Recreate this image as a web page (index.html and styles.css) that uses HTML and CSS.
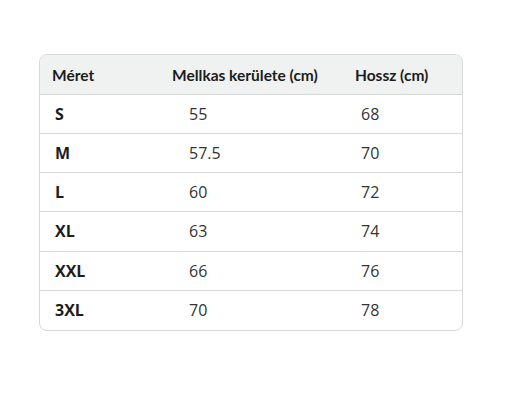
FILE: index.html
```html
<!DOCTYPE html>
<html lang="hu">
<head>
<meta charset="utf-8">
<link rel="stylesheet" href="styles.css">
</head>
<body>
<div class="wrap">
  <table class="size-table">
    <colgroup>
      <col class="c1"><col class="c2"><col class="c3">
    </colgroup>
    <thead>
      <tr><th>Méret</th><th class="h2">Mellkas kerülete (cm)</th><th class="h3">Hossz (cm)</th></tr>
    </thead>
    <tbody>
      <tr><td class="size">S</td><td class="v2">55</td><td class="v3">68</td></tr>
      <tr><td class="size">M</td><td class="v2">57.5</td><td class="v3">70</td></tr>
      <tr><td class="size">L</td><td class="v2">60</td><td class="v3">72</td></tr>
      <tr><td class="size">XL</td><td class="v2">63</td><td class="v3">74</td></tr>
      <tr><td class="size">XXL</td><td class="v2">66</td><td class="v3">76</td></tr>
      <tr><td class="size">3XL</td><td class="v2">70</td><td class="v3">78</td></tr>
    </tbody>
  </table>
</div>
</body>
</html>
```

FILE: styles.css
```css
html, body {
  margin: 0;
  padding: 0;
  background: #ffffff;
}
.wrap {
  padding: 54px 0 0 39px;
}
.size-table {
  width: 424px;
  border-collapse: separate;
  border-spacing: 0;
  border: 1px solid #d6d9d8;
  border-radius: 8px;
  overflow: hidden;
  font-family: "Open Sans", sans-serif;
  table-layout: fixed;
}
.c1 { width: 117px; }
.c2 { width: 189px; }
.c3 { width: 116px; }
th {
  background: #f0f2f1;
  height: 39px;
  padding: 0 0 0 12px;
  text-align: left;
  font-family: Lato, "Open Sans", sans-serif;
  font-weight: 700;
  font-size: 15.5px;
  color: #1c1c1c;
  border-bottom: 1px solid #d6d9d8;
}
th.h2 { padding-left: 15px; }
th.h3 { padding-left: 9px; }
td {
  height: 38px;
  padding: 0 0 0 15px;
  font-size: 16px;
  color: #333333;
  border-bottom: 1px solid #d6d9d8;
}
tbody tr:nth-child(n+3) td { height: 39px; }
tbody tr:nth-child(n+3) td { height: 38.3px; }
tbody tr:last-child td { border-bottom: none; height: 39px; }
td.size {
  font-weight: 700;
  color: #1c1c1c;
}
td.v2 { padding-left: 32px; }
td.v3 { padding-left: 15px; }
```
